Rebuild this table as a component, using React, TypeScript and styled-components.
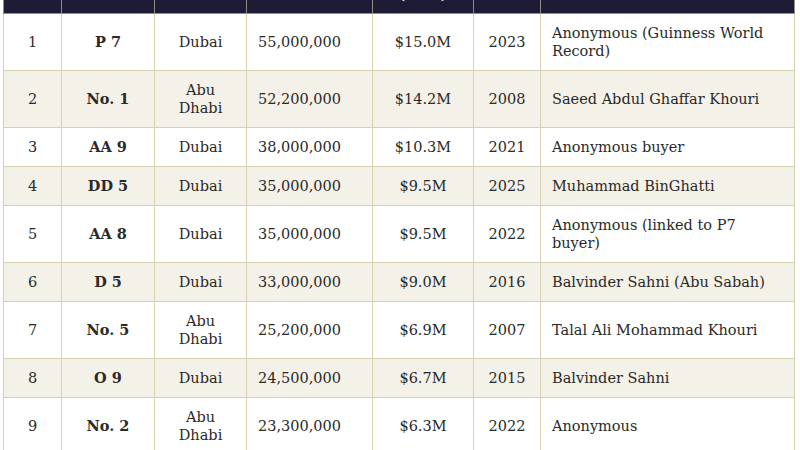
import React from "react";
import styled, { createGlobalStyle } from "styled-components";

const Global = createGlobalStyle`
  html, body { margin: 0; padding: 0; background: #ffffff; }
  body { font-family: "DejaVu Serif", "Liberation Serif", serif; }
`;

const Viewport = styled.div`
  width: 800px;
  height: 450px;
  overflow: hidden;
  padding-left: 3px;
  box-sizing: border-box;
`;

const Table = styled.table`
  width: 791px;
  border-collapse: collapse;
  table-layout: fixed;
  margin-top: -44px;
  font-size: 14.5px;
  line-height: 18px;
  color: #2a2a2a;
`;

const HeadCell = styled.th`
  background: #1d1b36;
  color: #ffffff;
  font-weight: bold;
  padding: 10px 10px;
  border: 1px solid #8f8c86;
  text-align: center;
  vertical-align: middle;
`;

const Row = styled.tr<{ $shade: boolean }>`
  background: ${(p) => (p.$shade ? "#f4f1e8" : "#ffffff")};
`;

const Cell = styled.td<{ $align?: "left" | "center"; $bold?: boolean }>`
  padding: 10px 11px;
  border: 1px solid #d8d1b0;
  text-align: ${(p) => p.$align ?? "center"};
  font-weight: ${(p) => (p.$bold ? "bold" : "normal")};
  vertical-align: middle;
`;

type Plate = {
  rank: number;
  plate: string;
  emirate: string;
  aed: string;
  usd: string;
  year: string;
  buyer: string;
};

const rows: Plate[] = [
  { rank: 1, plate: "P 7", emirate: "Dubai", aed: "55,000,000", usd: "$15.0M", year: "2023", buyer: "Anonymous (Guinness World Record)" },
  { rank: 2, plate: "No. 1", emirate: "Abu Dhabi", aed: "52,200,000", usd: "$14.2M", year: "2008", buyer: "Saeed Abdul Ghaffar Khouri" },
  { rank: 3, plate: "AA 9", emirate: "Dubai", aed: "38,000,000", usd: "$10.3M", year: "2021", buyer: "Anonymous buyer" },
  { rank: 4, plate: "DD 5", emirate: "Dubai", aed: "35,000,000", usd: "$9.5M", year: "2025", buyer: "Muhammad BinGhatti" },
  { rank: 5, plate: "AA 8", emirate: "Dubai", aed: "35,000,000", usd: "$9.5M", year: "2022", buyer: "Anonymous (linked to P7 buyer)" },
  { rank: 6, plate: "D 5", emirate: "Dubai", aed: "33,000,000", usd: "$9.0M", year: "2016", buyer: "Balvinder Sahni (Abu Sabah)" },
  { rank: 7, plate: "No. 5", emirate: "Abu Dhabi", aed: "25,200,000", usd: "$6.9M", year: "2007", buyer: "Talal Ali Mohammad Khouri" },
  { rank: 8, plate: "O 9", emirate: "Dubai", aed: "24,500,000", usd: "$6.7M", year: "2015", buyer: "Balvinder Sahni" },
  { rank: 9, plate: "No. 2", emirate: "Abu Dhabi", aed: "23,300,000", usd: "$6.3M", year: "2022", buyer: "Anonymous" },
];

const widths = [58, 93, 92, 126, 101, 67, 254];

export default function App() {
  return (
    <Viewport>
      <Global />
      <Table>
        <colgroup>
          {widths.map((w, i) => (
            <col key={i} style={{ width: w }} />
          ))}
        </colgroup>
        <thead>
          <tr>
            <HeadCell>Rank</HeadCell>
            <HeadCell>Plate</HeadCell>
            <HeadCell>Emirate</HeadCell>
            <HeadCell>Price (AED)</HeadCell>
            <HeadCell>Price (USD)</HeadCell>
            <HeadCell>Year</HeadCell>
            <HeadCell>Buyer</HeadCell>
          </tr>
        </thead>
        <tbody>
          {rows.map((r, i) => (
            <Row key={r.rank} $shade={i % 2 === 1}>
              <Cell>{r.rank}</Cell>
              <Cell $bold>{r.plate}</Cell>
              <Cell>{r.emirate}</Cell>
              <Cell $align="left">{r.aed}</Cell>
              <Cell>{r.usd}</Cell>
              <Cell>{r.year}</Cell>
              <Cell $align="left">{r.buyer}</Cell>
            </Row>
          ))}
        </tbody>
      </Table>
    </Viewport>
  );
}
